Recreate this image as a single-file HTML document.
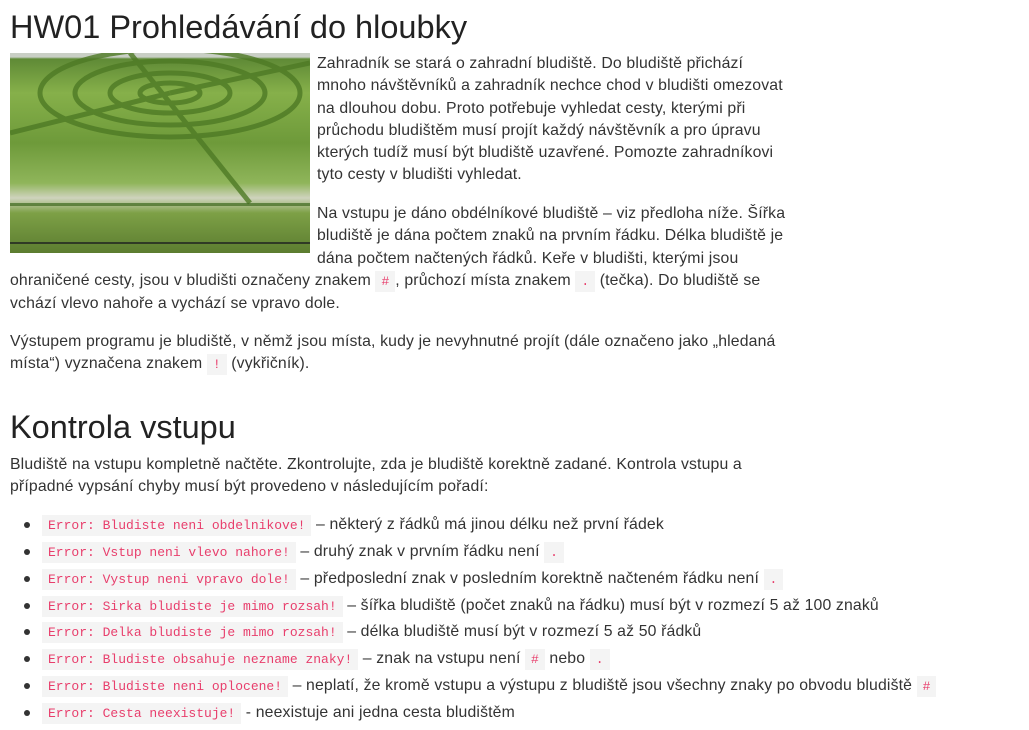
<!DOCTYPE html>
<html><head><meta charset="utf-8"><style>
body{margin:0;background:#fff;color:#333;font-family:"Liberation Sans","DejaVu Sans",sans-serif;font-size:15.8px;letter-spacing:0.15px;line-height:22.3px;}
.w{position:relative;padding:0 10px;white-space:nowrap}
h1{font-size:32.5px;font-weight:normal;margin:0;position:absolute;top:9px;left:10px;line-height:36px;color:#222;letter-spacing:0}
h2{font-size:32.5px;font-weight:normal;margin:0;position:absolute;top:409px;left:10px;line-height:36px;color:#222;letter-spacing:0}
.img{position:absolute;left:10px;top:53px;width:300px;height:200px;overflow:hidden;
background:linear-gradient(180deg,#c9cfc5 0,#c9cfc5 4px,#5f8a36 6px,#86b04a 40px,#6e9a3a 90px,#8fb55a 130px,#cfd3bd 145px,#7da046 160px,#5c7d30 200px);}
.p{position:absolute;}
code{font-family:"Liberation Mono","DejaVu Sans Mono",monospace;font-size:13px;letter-spacing:0;color:#e83e6c;background:#f4f4f4;padding:3px 6px;}
.li{position:absolute;left:42px}
.b{position:absolute;left:24px;width:6px;height:6px;border-radius:3px;background:#333}
</style></head><body><div class="w">
<h1>HW01 Prohledávání do hloubky</h1>
<div class="img">
<svg width="300" height="200">
<g fill="none" stroke="#4e7a25" stroke-width="5" opacity=".8">
<ellipse cx="160" cy="40" rx="30" ry="10"/><ellipse cx="160" cy="40" rx="60" ry="20"/><ellipse cx="160" cy="40" rx="95" ry="32"/><ellipse cx="160" cy="40" rx="130" ry="44"/>
<line x1="0" y1="80" x2="160" y2="40"/><line x1="160" y1="40" x2="300" y2="10"/><line x1="120" y1="0" x2="240" y2="150"/>
</g>
<g fill="#3e6a1f" opacity=".7">
<rect x="0" y="150" width="300" height="3"/>
</g>
<g stroke="#2f3a25" stroke-width="2"><line x1="0" y1="190" x2="300" y2="190"/></g>
</svg></div>
<div class="p" style="left:317px;top:53px">Zahradník se stará o zahradní bludiště. Do bludiště přichází<br>mnoho návštěvníků a zahradník nechce chod v bludišti omezovat<br>na dlouhou dobu. Proto potřebuje vyhledat cesty, kterými při<br>průchodu bludištěm musí projít každý návštěvník a pro úpravu<br>kterých tudíž musí být bludiště uzavřené. Pomozte zahradníkovi<br>tyto cesty v bludišti vyhledat.</div>
<div class="p" style="left:317px;top:203px">Na vstupu je dáno obdélníkové bludiště – viz předloha níže. Šířka<br>bludiště je dána počtem znaků na prvním řádku. Délka bludiště je<br>dána počtem načtených řádků. Keře v bludišti, kterými jsou</div>
<div class="p" style="left:10px;top:270px">ohraničené cesty, jsou v bludišti označeny znakem <code>#</code>, průchozí místa znakem <code>.</code> (tečka). Do bludiště se<br>vchází vlevo nahoře a vychází se vpravo dole.</div>
<div class="p" style="left:10px;top:331px">Výstupem programu je bludiště, v němž jsou místa, kudy je nevyhnutné projít (dále označeno jako „hledaná<br>místa“) vyznačena znakem <code>!</code> (vykřičník).</div>
<h2>Kontrola vstupu</h2>
<div class="p" style="left:10px;top:454px">Bludiště na vstupu kompletně načtěte. Zkontrolujte, zda je bludiště korektně zadané. Kontrola vstupu a<br>případné vypsání chyby musí být provedeno v následujícím pořadí:</div>
<div class="b" style="top:522px"></div><div class="li" style="top:514px"><code>Error: Bludiste neni obdelnikove!</code> – některý z řádků má jinou délku než první řádek</div>
<div class="b" style="top:549px"></div><div class="li" style="top:541px"><code>Error: Vstup neni vlevo nahore!</code> – druhý znak v prvním řádku není <code>.</code></div>
<div class="b" style="top:576px"></div><div class="li" style="top:568px"><code>Error: Vystup neni vpravo dole!</code> – předposlední znak v posledním korektně načteném řádku není <code>.</code></div>
<div class="b" style="top:603px"></div><div class="li" style="top:595px"><code>Error: Sirka bludiste je mimo rozsah!</code> – šířka bludiště (počet znaků na řádku) musí být v rozmezí 5 až 100 znaků</div>
<div class="b" style="top:629px"></div><div class="li" style="top:621px"><code>Error: Delka bludiste je mimo rozsah!</code> – délka bludiště musí být v rozmezí 5 až 50 řádků</div>
<div class="b" style="top:656px"></div><div class="li" style="top:648px"><code>Error: Bludiste obsahuje nezname znaky!</code> – znak na vstupu není <code>#</code> nebo <code>.</code></div>
<div class="b" style="top:683px"></div><div class="li" style="top:675px"><code>Error: Bludiste neni oplocene!</code> – neplatí, že kromě vstupu a výstupu z bludiště jsou všechny znaky po obvodu bludiště <code>#</code></div>
<div class="b" style="top:710px"></div><div class="li" style="top:702px"><code>Error: Cesta neexistuje!</code> - neexistuje ani jedna cesta bludištěm</div>
</div></body></html>
